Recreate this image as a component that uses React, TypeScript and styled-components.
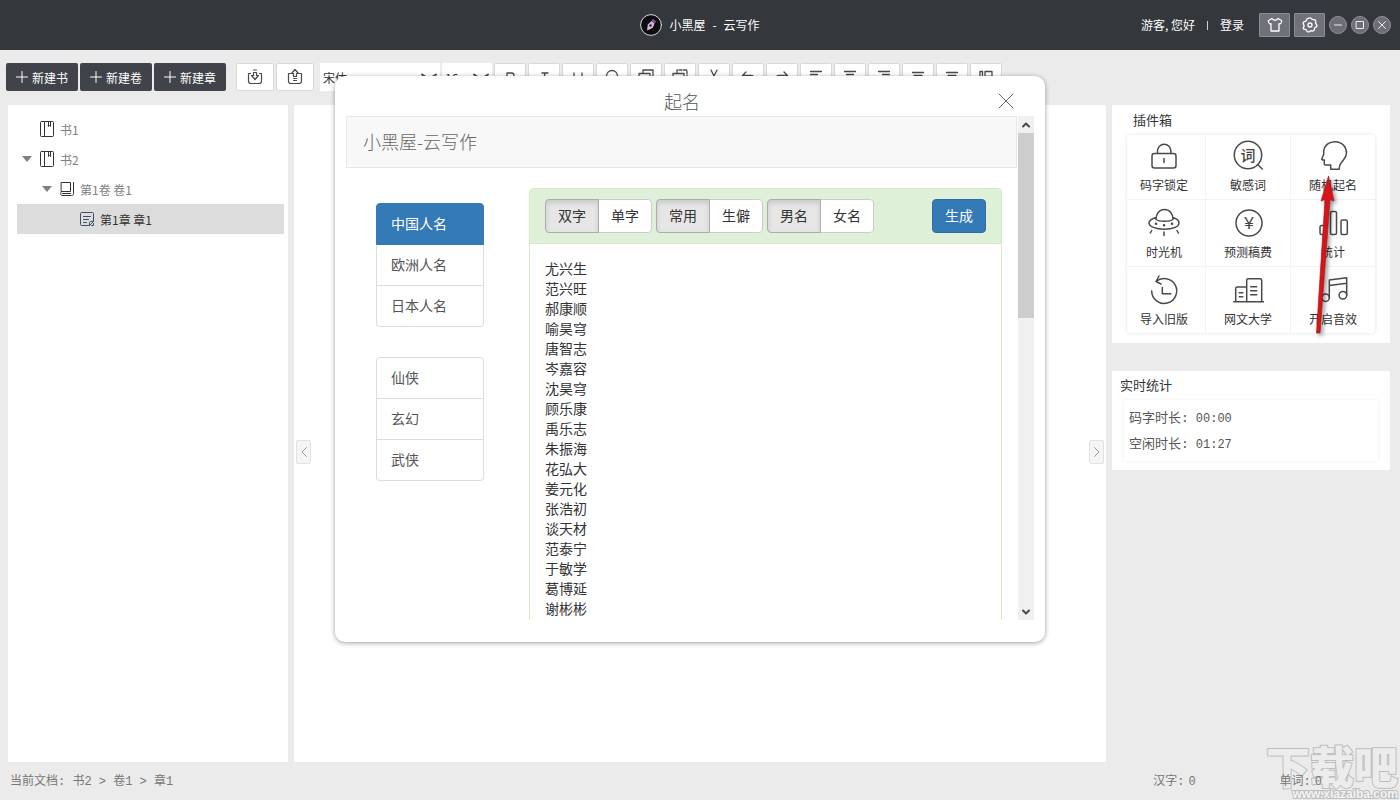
import React from "react";
import styled, { createGlobalStyle, css } from "styled-components";

const SANS = `"Noto Sans CJK SC", sans-serif`;
const MONO = `"Liberation Mono", "Noto Sans CJK SC", monospace`;

const GlobalStyle = createGlobalStyle`
  * { box-sizing: border-box; }
  body { margin: 0; background: #ebebeb; font-family: ${SANS}; font-size: 12px; color: #333; }
  button, select { font-family: inherit; font-size: inherit; color: inherit; margin: 0; padding: 0; border: 0; background: none; cursor: pointer; }
  a { color: inherit; text-decoration: none; }
  ul { list-style: none; margin: 0; padding: 0; }
  h1, h2, p { margin: 0; font-weight: 400; }
`;

const Page = styled.div`
  position: relative;
  min-height: 100vh;
  display: flex;
  flex-direction: column;
  overflow: hidden;
`;

/* ---------- title bar ---------- */
const TitleBar = styled.header`
  height: 50px;
  display: grid;
  grid-template-columns: 1fr auto 1fr;
  align-items: center;
  padding: 0 9px;
  background: #34373c;
  color: #fff;
`;
const Brand = styled.h1`
  grid-column: 2;
  display: flex;
  align-items: center;
  gap: 7px;
  font-size: 12px;
  line-height: 20px;
`;
const Account = styled.div`
  display: flex;
  align-items: center;
  justify-content: flex-end;
  gap: 4px;
`;
const AccountText = styled.div`
  display: flex;
  align-items: center;
  gap: 12px;
  padding-right: 11px;
  line-height: 20px;
`;
const Divider = styled.span`
  width: 1px;
  height: 9px;
  background: #cfd0d2;
`;
const SquareButton = styled.button`
  width: 31px;
  height: 24px;
  display: grid;
  place-items: center;
  border: 1px solid #8a8d93;
  border-radius: 1px;
  background: #6f7279;
`;
const RoundButton = styled.button`
  width: 18px;
  height: 18px;
  display: grid;
  place-items: center;
  border: 1px solid #8f9196;
  border-radius: 50%;
  background: #6c6f75;
`;

/* ---------- toolbar ---------- */
const Toolbar = styled.div`
  display: flex;
  gap: 2px;
  padding: 13px 6px 14px;
`;
const ToolGroup = styled.div<{ $space?: number }>`
  display: flex;
  gap: 2px;
  margin-right: ${(p) => p.$space ?? 0}px;
`;
const NewButton = styled.button`
  width: 72px;
  height: 28px;
  display: flex;
  align-items: center;
  justify-content: center;
  gap: 4px;
  border-radius: 2px;
  background: #404349;
  color: #fff;
`;
const ToolButton = styled.button<{ $wide?: boolean }>`
  width: ${(p) => (p.$wide ? 38 : 32)}px;
  height: 28px;
  display: grid;
  place-items: center;
  border: 1px solid #d9d9d9;
  border-radius: 2px;
  background: #fff;
`;
const SelectBox = styled.label<{ $width: number }>`
  position: relative;
  width: ${(p) => p.$width}px;
  height: 28px;
  background: #fff;
  select {
    width: 100%;
    height: 28px;
    padding: 0 3px;
    appearance: none;
    font-family: ${SANS};
  }
  svg {
    position: absolute;
    right: 3px;
    top: 10px;
    pointer-events: none;
  }
`;

/* ---------- workspace ---------- */
const Workspace = styled.main`
  flex: 1;
  display: grid;
  grid-template-columns: 280px 1fr 278px;
  gap: 6px;
  padding: 0 10px 0 8px;
`;
const Tree = styled.nav`
  padding: 9px 4px 9px 9px;
  background: #fff;
`;
const TreeRow = styled.button<{ $level: number; $active?: boolean }>`
  width: 100%;
  height: 30px;
  display: grid;
  grid-template-columns: 10px 14px 1fr;
  column-gap: 7px;
  align-items: center;
  padding-left: ${(p) => 5 + p.$level * 20}px;
  text-align: left;
  color: ${(p) => (p.$active ? "#333" : "#808080")};
  background: ${(p) => (p.$active ? "#dcdcdc" : "transparent")};
  svg:nth-child(2) { margin-left: 1px; }
`;
const Editor = styled.section`
  display: flex;
  justify-content: space-between;
  align-items: flex-start;
  padding: 335px 2px 0;
  background: #fff;
`;
const Collapse = styled.button`
  width: 15px;
  height: 24px;
  display: grid;
  place-items: center;
  border: 1px solid #e2e2e2;
  border-radius: 2px;
  background: #f5f5f5;
`;
const Side = styled.aside`
  display: flex;
  flex-direction: column;
  gap: 28px;
`;
const PluginPanel = styled.section`
  padding: 5px 15px 10px;
  background: #fff;
`;
const StatsPanel = styled.section`
  padding: 4px 12px 9px;
  background: #fff;
`;
const PanelTitle = styled.h2<{ $inset?: boolean }>`
  padding-left: ${(p) => (p.$inset ? 6 : 0)}px;
  margin: 0 0 5px ${(p) => (p.$inset ? 0 : -4)}px;
  font-size: 13px;
  line-height: 20px;
`;
const PluginGrid = styled.div`
  display: grid;
  grid-template-columns: 1fr 85px 84px;
  grid-template-rows: 65px 67px 66px;
  border-radius: 4px;
  box-shadow: 0 0 4px #dfe4e4;
`;
const Plugin = styled.button`
  display: flex;
  flex-direction: column;
  align-items: center;
  justify-content: flex-end;
  gap: 3px;
  padding-bottom: 4px;
  line-height: 20px;
  border-right: 1px solid #f3f3f3;
  border-bottom: 1px solid #f3f3f3;
  &:nth-child(3n + 1) { padding-right: 4px; }
  &:nth-child(3n) { border-right: 0; }
  &:nth-child(n + 7) { border-bottom: 0; }
`;
const Stats = styled.dl`
  margin: 0;
  padding: 6px 5px 3px;
  box-shadow: 0 0 3px #e6ecec;
  color: #555;
`;
const StatLine = styled.div`
  display: flex;
  gap: 7px;
  font-size: 13px;
  line-height: 26px;
  dt, dd { margin: 0; }
  dt { font-family: ${MONO}; }
  dd { font: 12px/26px ${MONO}; }
`;

/* ---------- status bar ---------- */
const StatusBar = styled.footer`
  position: relative;
  z-index: 1;
  height: 38px;
  display: flex;
  align-items: center;
  justify-content: space-between;
  padding: 0 78px 2px 10px;
  font-family: ${MONO};
  color: #777;
`;
const Counts = styled.div`
  display: flex;
  gap: 84px;
  span { margin-left: 4px; }
`;

/* ---------- dialog ---------- */
const Overlay = styled.div`
  position: absolute;
  inset: 0;
  z-index: 2;
  display: flex;
  justify-content: center;
  align-items: flex-start;
  padding: 76px 20px 0 0;
`;
const Dialog = styled.section`
  width: 710px;
  padding: 10px 11px 22px;
  border-radius: 10px;
  background: #fff;
  box-shadow: 0 1px 5px rgba(0, 0, 0, 0.38);
`;
const DialogHead = styled.div`
  height: 30px;
  display: grid;
  grid-template-columns: 56px 1fr 56px;
  align-items: center;
  h2 { grid-column: 2; padding-right: 16px; text-align: center; font-size: 18px; font-weight: 300; color: #555; }
  button { height: 30px; display: grid; place-items: center; }
`;
const Frame = styled.div`
  height: 504px;
  display: grid;
  grid-template-columns: 1fr 17px;
  overflow: hidden;
`;
const FramePage = styled.div`
  height: 504px;
  overflow: hidden;
`;
const Navbar = styled.div`
  height: 52px;
  padding: 0 16px;
  border: 1px solid #e7e7e7;
  background: #f8f8f8;
  font-size: 18px;
  font-weight: 300;
  line-height: 48px;
  color: #666;
`;
const Columns = styled.div`
  display: grid;
  grid-template-columns: 108px 1fr;
  gap: 45px;
  align-items: start;
  padding: 20px 15px 0 30px;
`;
const Categories = styled.div`
  display: flex;
  flex-direction: column;
  gap: 30px;
  padding-top: 15px;
`;
const ListGroup = styled.div`
  display: flex;
  flex-direction: column;
`;
const ListItem = styled.a<{ $active?: boolean }>`
  padding: 9px 14px 11px;
  font-size: 14px;
  line-height: 20px;
  border: 1px solid #ddd;
  color: #555;
  & + & { border-top: 0; }
  &:first-child { border-radius: 4px 4px 0 0; }
  &:last-child { border-radius: 0 0 4px 4px; }
  ${(p) =>
    p.$active &&
    css`
      border-color: #337ab7;
      background: #337ab7;
      color: #fff;
    `}
`;
const ResultPanel = styled.div`
  border: 1px solid #d6e9c6;
  border-radius: 4px;
`;
const ResultHead = styled.div`
  display: flex;
  gap: 4px;
  padding: 10px 15px;
  border-bottom: 1px solid #d6e9c6;
  border-radius: 3px 3px 0 0;
  background: #dff0d8;
`;
const Choice = styled.div`
  display: flex;
`;
const Option = styled.button<{ $on?: boolean }>`
  width: 54px;
  height: 34px;
  padding-bottom: 2px;
  font-size: 14px;
  border: 1px solid ${(p) => (p.$on ? "#adadad" : "#ccc")};
  background: ${(p) => (p.$on ? "#e6e6e6" : "#fff")};
  box-shadow: ${(p) => (p.$on ? "inset 0 3px 5px rgba(0,0,0,.125)" : "none")};
  &:first-child { border-radius: 4px 0 0 4px; position: relative; }
  &:last-child { border-radius: 0 4px 4px 0; margin-left: -1px; }
`;
const Generate = styled.button`
  width: 54px;
  height: 34px;
  padding-bottom: 2px;
  margin-left: auto;
  border: 1px solid #2e6da4;
  border-radius: 4px;
  background: #337ab7;
  color: #fff;
  font-size: 14px;
`;
const Names = styled.ul`
  padding: 14px 15px;
  font-size: 14px;
  line-height: 20px;
`;
const ScrollTrack = styled.div`
  display: flex;
  flex-direction: column;
  margin-left: 1px;
  background: #f0f0f0;
  button { height: 17px; display: grid; place-items: center; }
`;
const ScrollThumb = styled.div`
  height: 185px;
  margin-bottom: auto;
  background: #cdcdcd;
`;

/* ---------- pointer and site mark ---------- */
const Pointer = styled.svg`
  position: absolute;
  z-index: 3;
  top: 172px;
  right: 60px;
  filter: drop-shadow(2px 2px 2px rgba(0, 0, 0, 0.45));
`;
const SiteMark = styled.div`
  position: absolute;
  right: 2px;
  bottom: 0;
  text-align: right;
  color: #ececec;
  paint-order: stroke fill;
  -webkit-text-stroke: 2px #bdbdbd;
  strong { display: block; font-size: 44px; line-height: 47px; font-weight: 900; }
  span { display: block; font: bold 12px/11px "Liberation Sans", sans-serif; color: #f4f4f4; }
`;

/* ---------- icons ---------- */
type IconProps = { w?: number; h?: number; box?: string; color?: string; sw?: number; children: React.ReactNode };
const Icon = ({ w = 16, h = w, box = `0 0 ${w} ${h}`, color = "#4a4a4a", sw = 1, children }: IconProps) => (
  <svg width={w} height={h} viewBox={box} fill="none" stroke={color} strokeWidth={sw} strokeLinecap="round" strokeLinejoin="round" aria-hidden="true">
    {children}
  </svg>
);

const Logo = () => (
  <Icon w={22} color="#d8d8d8">
    <circle cx="11" cy="11" r="10.4" fill="#0d0d10" />
    <path d="M7 16.500 7.800 10.500 11.500 7 14.500 9.500 12.500 13.800Z" fill="#c9b8e6" stroke="none" />
    <path d="M11.500 7 13 4.800 16.200 7.500 14.500 9.500Z" fill="#8d4f9b" stroke="none" />
    <path d="M7 16.500 12.500 13.800 14.500 9.500Z" fill="#e6c59a" stroke="none" />
    <circle cx="10.500" cy="11.500" r="1.200" fill="#223" stroke="none" />
  </Icon>
);

const BookIcon = () => (
  <Icon w={14} h={16} color="#333">
    <rect x=".5" y=".5" width="13" height="15" rx="1" />
    <path d="M4.500.5v15M8.500.5v5l1-1 1 1v-5" />
  </Icon>
);
const VolumeIcon = () => (
  <Icon w={14} h={16} color="#333">
    <path d="M1.500 1.500h9v9h-9zM1.500 10.500c-1.200 0-1.200 4 .5 4h9.500c1.500 0 2-.5 2-2V1.500M2.500 12.500h8" />
  </Icon>
);
const ChapterIcon = () => (
  <Icon w={14} h={16} color="#3c4f66">
    <path d="M13.500 10.500V2.500c0-.6-.4-1-1-1h-11c-.6 0-1 .4-1 1v11c0 .6.4 1 1 1h8M13.500 10.500l-4 4v-3c0-.6.400-1 1-1zM13.500 12.500v2h-2M3.500 5.500h7M3.500 8.500h5M3.500 11.500h3" />
  </Icon>
);
const Caret = () => (
  <svg width="10" height="6" viewBox="0 0 10 6" aria-hidden="true">
    <path d="M0 0h10L5 6z" fill="#808080" />
  </svg>
);

const Down = () => (
  <Icon w={16} h={8} sw={2}>
    <path d="M1 1.500 8 6l7-4.500" />
  </Icon>
);

const plugins: { label: string; art: React.ReactNode }[] = [
  {
    label: "码字锁定",
    art: (
      <>
        <rect x="4" y="13.500" width="24" height="14.500" rx="2.500" />
        <path d="M9.500 13.500V11a6.700 6.700 0 0 1 13.400 0v2.500M16 18.500v4" />
      </>
    ),
  },
  {
    label: "敏感词",
    art: (
      <>
        <circle cx="16" cy="15" r="13.700" />
        <path d="m25.500 24.500 4.800 4.500" />
        <text x="16" y="20.500" textAnchor="middle" fontSize="15" fontWeight="500" fill="#444" stroke="none">词</text>
      </>
    ),
  },
  {
    label: "随机起名",
    art: <path d="M4.700 19.300 6.700 14.300V11C7.400 5.200 12 1.700 18 1.700c7 0 11.500 5.300 11.500 11.300 0 4.500-2.500 6.300-4.500 8.700-1.500 1.800-2.800 3-2.800 7.600h-8.500V25H8.500c-1 0-1.300-.7-1.200-1.700l.1-3.300c-1.200 0-2-.2-2.700-.7z" />,
  },
  {
    label: "时光机",
    art: (
      <>
        <path d="M8 12.500c0-6 3.500-10 8.500-10s8.500 4 8.500 10c-3 2.300-14 2.300-17 0zM8 10.500c-4.500 1.300-7 3.300-7 5.500 0 3.500 6.500 6.200 15.500 6.200S31 19.500 31 16c0-2.200-2-4.200-6-5.500M3.700 23.500 2.300 26M16 25v3.500M29 23.500l1.400 2.500" />
        <path d="M8 16.700h.1M16 18.300h.1M24 16.700h.1" strokeWidth="2.500" />
      </>
    ),
  },
  {
    label: "预测稿费",
    art: (
      <>
        <circle cx="17" cy="16" r="13" />
        <text x="17" y="22" textAnchor="middle" fontSize="17" fontFamily="Liberation Sans" fill="#444" stroke="none">¥</text>
      </>
    ),
  },
  {
    label: "统计",
    art: (
      <>
        <rect x="3" y="18.500" width="5" height="9" rx="1.500" />
        <rect x="13.500" y="4.500" width="6" height="23" rx="1.500" />
        <rect x="24" y="13" width="6.300" height="14.500" rx="1.500" />
      </>
    ),
  },
  {
    label: "导入旧版",
    art: <path d="M3.700 17A12.500 12.500 0 1 0 8 7.500M11 2 8 7.500l5 2.500M14.300 13.500v6.200h8.500" />,
  },
  {
    label: "网文大学",
    art: <path d="M1.700 27.700h30M3.700 27.700V14.500c0-1 .6-1.500 1.500-1.500h9.500M14.700 27.700V6.200c0-1 .6-1.500 1.500-1.500h12c1 0 1.500.5 1.500 1.500v21.500M18.700 12.700h6M18.700 16.700h6M18.700 20.700h6M7.300 18.700h3.500M7.300 22.700h3.500" />,
  },
  {
    label: "开启音效",
    art: (
      <>
        <path d="M12.300 23.700V6l17.400-2.300v17.600M12.300 11.500l17.400-2.300" />
        <circle cx="8.600" cy="23.700" r="3.700" />
        <circle cx="25.900" cy="21.300" r="3.800" />
      </>
    ),
  },
];

const tools: { label: string; art: React.ReactNode }[] = [
  { label: "加粗", art: <path d="M5 4h4.500a2.500 2.500 0 0 1 0 5H5zM5 9h5a2.500 2.500 0 0 1 0 5H5z" /> },
  { label: "斜体", art: <path d="M6 4h6M9 4 7 14M4.500 14h5" /> },
  { label: "下划线", art: <path d="M4 4v5a4 4 0 0 0 8 0V4M3.500 15h9" /> },
  { label: "查找", art: <><circle cx="8" cy="7" r="5.500" /><path d="m12 11 3 3.500" /></> },
  { label: "复制", art: <path d="M5 3.500V1h10v9h-2.500M1 4.500h11v9H1z" /> },
  { label: "粘贴", art: <><path d="M5 3.500V1h10v9h-2.500" strokeDasharray="3 1.500" /><path d="M1 4.500h11v9H1z" /></> },
  { label: "剪切", art: <path d="m5 1 5 10M11 1 6 11M5 13a2 2 0 1 1-4 0 2 2 0 0 1 4 0zM15 13a2 2 0 1 1-4 0 2 2 0 0 1 4 0z" /> },
  { label: "撤销", art: <path d="M6 3 2.500 6.500 6 10M2.500 6.500H11a3.500 3.500 0 0 1 0 7H6" /> },
  { label: "重做", art: <path d="m10 3 3.500 3.500L10 10M13.500 6.500H5a3.500 3.500 0 0 0 0 7h5" /> },
  { label: "左对齐", art: <path d="M2.500 2.500h11M2.500 5.500h7M2.500 8.500h11M2.500 11.500h7" /> },
  { label: "居中", art: <path d="M2.500 2.500h11M4.500 5.500h7M2.500 8.500h11M4.500 11.500h7" /> },
  { label: "右对齐", art: <path d="M2.500 2.500h11M6.500 5.500h7M2.500 8.500h11M6.500 11.500h7" /> },
  { label: "行距", art: <path d="M2.500 3.500h11M4 6.500h8M2.500 9.500h11" /> },
  { label: "段距", art: <path d="M2.500 3.500h11M4 6.500h8M2.500 9.500h11" /> },
  { label: "排版", art: <path d="M2 2.500h2.500v11H2zM7 2.500h7v5H7zM7 10.500h7" /> },
];

const names = ["尤兴生", "范兴旺", "郝康顺", "喻昊穹", "唐智志", "岑嘉容", "沈昊穹", "顾乐康", "禹乐志", "朱振海", "花弘大", "姜元化", "张浩初", "谈天材", "范泰宁", "于敏学", "葛博延", "谢彬彬"];

const choices = [
  ["双字", "单字"],
  ["常用", "生僻"],
  ["男名", "女名"],
];

export default function App() {
  return (
    <Page>
      <GlobalStyle />
      <TitleBar>
        <Brand>
          <Logo />
          <span>小黑屋</span>
          <span>-</span>
          <span>云写作</span>
        </Brand>
        <Account>
          <AccountText>
            <span>游客, 您好</span>
            <Divider />
            <a href="#login">登录</a>
          </AccountText>
          <SquareButton aria-label="皮肤">
            <Icon w={16} color="#fff" sw={1.3}>
              <path d="M5 1.500 1.500 3.500c-.3 1.500.2 3 1.500 3.500l1-.3V14h8V6.700l1 .3c1.300-.5 1.800-2 1.500-3.500L11 1.500c-.8 2.300-5.200 2.300-6 0z" />
            </Icon>
          </SquareButton>
          <SquareButton aria-label="设置">
            <Icon w={16} color="#fff" sw={1.3}>
              <path d="M8 .8c1.300 0 1.500 1.400 2.500 1.700s2.200-.2 3 .8-.2 2 .1 3 1.600 1.300 1.400 2.500-1.600 1.200-2.200 2.100-.1 2.200-1.200 2.900-1.900-.3-2.900 0-1.400 1.500-2.700 1.100-1.100-1.700-2-2.200-2.200 0-2.600-1.200.8-1.800.7-2.800S.8 6.900 1.200 5.700s1.700-.8 2.500-1.500.600-2 1.700-2.500S7 .8 8 .8z" />
              <circle cx="8" cy="8" r="2" />
            </Icon>
          </SquareButton>
          <RoundButton aria-label="最小化">
            <Icon w={10} color="#eee"><path d="M1.500 5h7" /></Icon>
          </RoundButton>
          <RoundButton aria-label="最大化">
            <Icon w={10} color="#eee"><rect x="1.500" y="1.500" width="7" height="7" /></Icon>
          </RoundButton>
          <RoundButton aria-label="关闭">
            <Icon w={10} color="#eee"><path d="m1.500 1.500 7 7M8.500 1.500l-7 7" /></Icon>
          </RoundButton>
        </Account>
      </TitleBar>

      <Toolbar>
        <ToolGroup $space={8}>
          {["新建书", "新建卷", "新建章"].map((t) => (
            <NewButton key={t}>
              <Icon w={12} color="#fff"><path d="M6 .5v11M.5 6h11" /></Icon>
              {t}
            </NewButton>
          ))}
        </ToolGroup>
        <ToolGroup $space={4}>
          <ToolButton $wide aria-label="导入">
            <Icon w={16} sw={1.2}><path d="M3.500 4.500h-2V12c0 1.500.8 2.500 2.500 2.500h8c1.700 0 2.500-1 2.500-2.500V4.500h-2M6.500 1h3M6.500 3.500h3v3H11.500L8 10.500 4.500 6.500h2z" /></Icon>
          </ToolButton>
          <ToolButton $wide aria-label="导出">
            <Icon w={16} sw={1.2}><path d="M3.500 4.500h-2V12c0 1.500.8 2.500 2.500 2.500h8c1.700 0 2.500-1 2.500-2.500V4.500h-2M8 .5 4.500 4.500h2v3h3v-3h2zM6.500 9.500h3M6.500 11.500h3" /></Icon>
          </ToolButton>
        </ToolGroup>
        <SelectBox $width={120}>
          <select aria-label="字体" defaultValue="宋体"><option>宋体</option></select>
          <Down />
        </SelectBox>
        <SelectBox $width={50}>
          <select aria-label="字号" defaultValue="16"><option>16</option></select>
          <Down />
        </SelectBox>
        <ToolGroup>
          {tools.map((t) => (
            <ToolButton key={t.label} aria-label={t.label}>
              <Icon w={16} sw={1.3}>{t.art}</Icon>
            </ToolButton>
          ))}
        </ToolGroup>
      </Toolbar>

      <Workspace>
        <Tree>
          <TreeRow $level={0}><span /><BookIcon />书1</TreeRow>
          <TreeRow $level={0}><Caret /><BookIcon />书2</TreeRow>
          <TreeRow $level={1}><Caret /><VolumeIcon />第1卷 卷1</TreeRow>
          <TreeRow $level={2} $active><span /><ChapterIcon />第1章 章1</TreeRow>
        </Tree>
        <Editor>
          <Collapse aria-label="收起目录">
            <Icon w={8} h={14} color="#999"><path d="M6.500 2.500 2 7l4.500 4.500" /></Icon>
          </Collapse>
          <Collapse aria-label="收起侧栏">
            <Icon w={8} h={14} color="#999"><path d="M1.500 2.500 6 7l-4.500 4.500" /></Icon>
          </Collapse>
        </Editor>
        <Side>
          <PluginPanel>
            <PanelTitle $inset>插件箱</PanelTitle>
            <PluginGrid>
              {plugins.map((p) => (
                <Plugin key={p.label}>
                  <Icon w={32} sw={1.5}>{p.art}</Icon>
                  {p.label}
                </Plugin>
              ))}
            </PluginGrid>
          </PluginPanel>
          <StatsPanel>
            <PanelTitle>实时统计</PanelTitle>
            <Stats>
              <StatLine><dt>码字时长:</dt><dd>00:00</dd></StatLine>
              <StatLine><dt>空闲时长:</dt><dd>01:27</dd></StatLine>
            </Stats>
          </StatsPanel>
        </Side>
      </Workspace>

      <SiteMark>
        <strong>下载吧</strong>
        <span>www.xiazaiba.com</span>
      </SiteMark>

      <StatusBar>
        <span>当前文档: 书2 &gt; 卷1 &gt; 章1</span>
        <Counts>
          <div>汉字:<span>0</span></div>
          <div>单词:<span>0</span></div>
        </Counts>
      </StatusBar>

      <Overlay>
        <Dialog role="dialog" aria-label="起名">
          <DialogHead>
            <h2>起名</h2>
            <button aria-label="关闭">
              <Icon w={16} color="#666"><path d="m1 1 14 14M15 1 1 15" /></Icon>
            </button>
          </DialogHead>
          <Frame>
            <FramePage>
              <Navbar>小黑屋-云写作</Navbar>
              <Columns>
                <Categories>
                  <ListGroup>
                    <ListItem href="#cn" $active>中国人名</ListItem>
                    <ListItem href="#eu">欧洲人名</ListItem>
                    <ListItem href="#jp">日本人名</ListItem>
                  </ListGroup>
                  <ListGroup>
                    <ListItem href="#xianxia">仙侠</ListItem>
                    <ListItem href="#xuanhuan">玄幻</ListItem>
                    <ListItem href="#wuxia">武侠</ListItem>
                  </ListGroup>
                </Categories>
                <ResultPanel>
                  <ResultHead>
                    {choices.map(([a, b]) => (
                      <Choice key={a}>
                        <Option $on>{a}</Option>
                        <Option>{b}</Option>
                      </Choice>
                    ))}
                    <Generate>生成</Generate>
                  </ResultHead>
                  <Names>
                    {names.map((n) => (
                      <li key={n}>{n}</li>
                    ))}
                  </Names>
                </ResultPanel>
              </Columns>
            </FramePage>
            <ScrollTrack>
              <button aria-label="向上滚动"><Icon w={8} h={6} sw={2}><path d="m1 4.500 3-3 3 3" /></Icon></button>
              <ScrollThumb />
              <button aria-label="向下滚动"><Icon w={8} h={6} sw={2}><path d="m1 1.500 3 3 3-3" /></Icon></button>
            </ScrollTrack>
          </Frame>
        </Dialog>
      </Overlay>

      <Pointer width="30" height="164" viewBox="0 0 30 164" aria-hidden="true">
        <path d="M18.500 4 24 29l-4-1.500L10 161H6.500L15 27.500 11 29z" fill="#d8141a" stroke="#a01016" strokeWidth=".6" />
      </Pointer>
    </Page>
  );
}
